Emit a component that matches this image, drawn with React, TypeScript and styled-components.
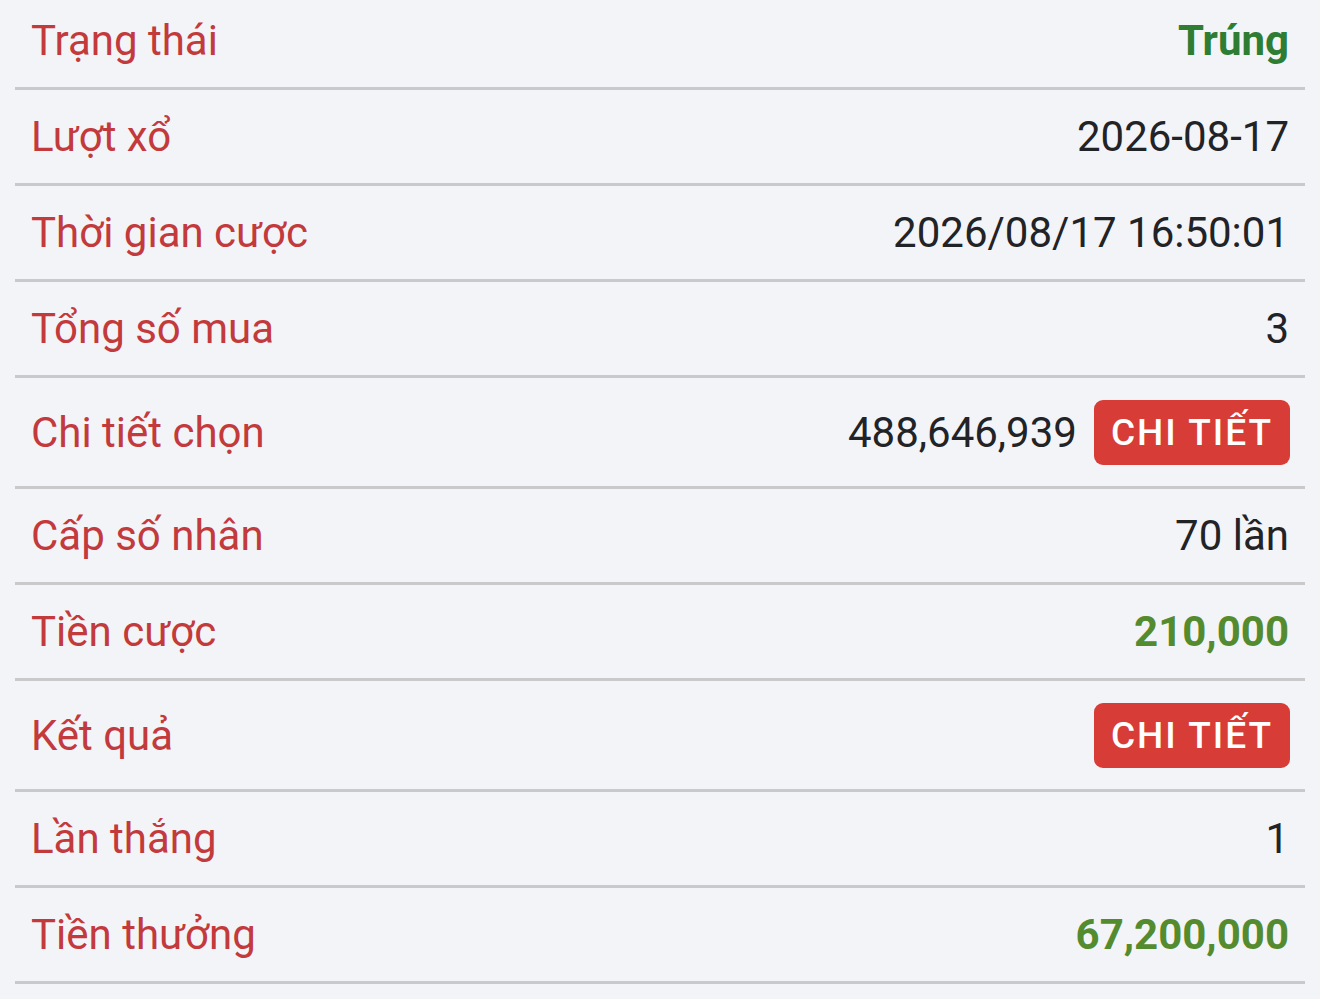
import React from "react";
import styled, { createGlobalStyle } from "styled-components";

const GlobalStyle = createGlobalStyle`
  html, body {
    margin: 0;
    padding: 0;
    background: #f3f4f8;
  }
  body {
    font-family: Roboto, "Noto Sans", "Liberation Sans", sans-serif;
  }
`;

const List = styled.div`
  margin: -6px 15px 0;
`;

const Row = styled.div<{ $tall?: boolean }>`
  display: flex;
  align-items: center;
  justify-content: space-between;
  height: ${(p) => (p.$tall ? 108 : 93)}px;
  padding: 0 16px;
  border-bottom: 3px solid #c9c9cc;
`;

const Label = styled.span`
  color: #c33a3c;
  font-size: 42px;
  font-weight: 400;
`;

const Value = styled.div<{ $tone?: "status" | "money" }>`
  display: flex;
  align-items: center;
  gap: 17px;
  font-size: 42px;
  font-weight: ${(p) => (p.$tone ? 700 : 400)};
  color: ${(p) =>
    p.$tone === "status" ? "#2e7d32" : p.$tone === "money" ? "#558b2f" : "#222326"};
`;

const DetailButton = styled.button`
  height: 65px;
  padding: 0 17px;
  border: none;
  border-radius: 9px;
  background: #d73c36;
  color: #fff;
  font-family: inherit;
  font-size: 37px;
  font-weight: 500;
  letter-spacing: 2px;
  margin-right: -1px;
  cursor: pointer;
`;

type Item = {
  label: string;
  value?: string;
  tone?: "status" | "money";
  detail?: boolean;
};

const items: Item[] = [
  { label: "Trạng thái", value: "Trúng", tone: "status" },
  { label: "Lượt xổ", value: "2026-08-17" },
  { label: "Thời gian cược", value: "2026/08/17 16:50:01" },
  { label: "Tổng số mua", value: "3" },
  { label: "Chi tiết chọn", value: "488,646,939", detail: true },
  { label: "Cấp số nhân", value: "70 lần" },
  { label: "Tiền cược", value: "210,000", tone: "money" },
  { label: "Kết quả", detail: true },
  { label: "Lần thắng", value: "1" },
  { label: "Tiền thưởng", value: "67,200,000", tone: "money" },
];

const App = () => {
  return (
    <>
      <GlobalStyle />
      <List>
        {items.map((item) => (
          <Row key={item.label} $tall={item.detail}>
            <Label>{item.label}</Label>
            <Value $tone={item.tone}>
              {item.value && <span>{item.value}</span>}
              {item.detail && <DetailButton>CHI TIẾT</DetailButton>}
            </Value>
          </Row>
        ))}
      </List>
    </>
  );
};

export default App;
